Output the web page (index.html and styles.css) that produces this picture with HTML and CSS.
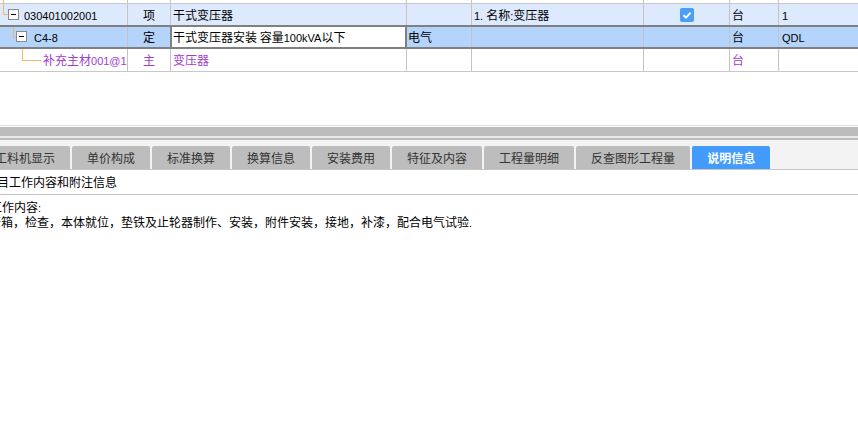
FILE: index.html
```html
<!DOCTYPE html>
<html lang="zh-CN">
<head>
<meta charset="utf-8">
<title>说明信息</title>
<link rel="stylesheet" href="styles.css">
</head>
<body>
<div class="page">
  <div class="grid">
    <div class="row stub">
      <div class="c c1"><span class="tl tl-stub"></span></div>
      <div class="c c2"></div><div class="c c3"></div><div class="c c4"></div>
      <div class="c c5"></div><div class="c c6"></div><div class="c c7"></div><div class="c c8"></div>
    </div>
    <div class="row r1">
      <div class="c c1 tree1">
        <span class="tl tl-v1"></span><span class="tl tl-h1"></span>
        <span class="box b1"></span>
        <span class="a">030401002001</span>
      </div>
      <div class="c c2 ctr">项</div>
      <div class="c c3">干式变压器</div>
      <div class="c c4"></div>
      <div class="c c5"><span class="a">1. </span>名称<span class="a">:</span>变压器</div>
      <div class="c c6 ctr"><span class="chk"><svg viewBox="0 0 14 14" width="14" height="14"><path d="M3.5 7.2 L6 9.6 L10.6 4.6" fill="none" stroke="#fff" stroke-width="2"/></svg></span></div>
      <div class="c c7">台</div>
      <div class="c c8"><span class="a">1</span></div>
    </div>
    <div class="row r2">
      <div class="c c1 tree2">
        <span class="tl tl-v2"></span><span class="tl tl-h2"></span>
        <span class="box b2"></span>
        <span class="a">C4-8</span>
      </div>
      <div class="c c2 ctr">定</div>
      <div class="c c3 edit">干式变压器安装 容量<span class="a">100kVA</span>以下</div>
      <div class="c c4">电气</div>
      <div class="c c5"></div>
      <div class="c c6"></div>
      <div class="c c7">台</div>
      <div class="c c8"><span class="a">QDL</span></div>
    </div>
    <div class="row r3 purple">
      <div class="c c1 tree3">
        <span class="tl tl-v3"></span><span class="tl tl-h3"></span>
        补充主材<span class="a">001@1</span>
      </div>
      <div class="c c2 ctr">主</div>
      <div class="c c3">变压器</div>
      <div class="c c4"></div>
      <div class="c c5"></div>
      <div class="c c6"></div>
      <div class="c c7">台</div>
      <div class="c c8"></div>
    </div>
  </div>

  <div class="splitter"></div>

  <div class="tabstrip">
    <div class="tab first">工料机显示</div>
    <div class="tab">单价构成</div>
    <div class="tab">标准换算</div>
    <div class="tab">换算信息</div>
    <div class="tab">安装费用</div>
    <div class="tab">特征及内容</div>
    <div class="tab">工程量明细</div>
    <div class="tab">反查图形工程量</div>
    <div class="tab active">说明信息</div>
  </div>

  <div class="info-head"><span class="shift">项目工作内容和附注信息</span></div>
  <div class="info-body">
    <p class="l1">工作内容<span class="a">:</span></p>
    <p class="l2">开箱，检查，本体就位，垫铁及止轮器制作、安装，附件安装，接地，补漆，配合电气试验<span class="a">.</span></p>
  </div>
</div>
</body>
</html>
```

FILE: styles.css
```css
* { box-sizing: border-box; }
html, body { margin: 0; padding: 0; background: #fff; }
body {
  width: 858px;
  height: 431px;
  overflow: hidden;
  font-family: "Noto Sans CJK SC", "Liberation Sans", sans-serif;
  font-size: 12px;
  color: #000;
}
.page { width: 858px; overflow: hidden; }

.a { font-family: "Liberation Sans", "Noto Sans CJK SC", sans-serif; font-size: 11px; }

/* grid */
.grid { height: 125px; }
.row { display: flex; width: 858px; }
.c {
  position: relative;
  border-right: 1px solid #c4c4c4;
  white-space: nowrap;
  overflow: hidden;
  padding-left: 2px;
}
.c1 { width: 128px; }
.c2 { width: 43px; }
.c3 { width: 236px; }
.c4 { width: 65px; }
.c5 { width: 172px; }
.c6 { width: 86px; }
.c7 { width: 49px; }
.c8 { flex: 1; border-right: 0; padding-left: 3px; }
.ctr { text-align: center; padding-left: 0; }

.stub { height: 4px; border-bottom: 1px solid #c8c8c8; }
.r1 { height: 21px; line-height: 21px; background: #dde9fc; }
.r2 {
  height: 24px; line-height: 20px;
  background: #b4d4fc;
  border-top: 2px solid #808080;
  border-bottom: 2px solid #808080;
}
.r3 { height: 23px; line-height: 22px; border-bottom: 1px solid #c8c8c8; }
.purple { color: #a23cc8; }

.r2 .c4 { padding-left: 1px; }
.edit {
  background: #fff;
  border-right-color: #808080;
  box-shadow: -1px 0 0 #808080, inset 1px 0 0 #808080, inset -1px 0 0 #808080;
}
.c6 .chk {
  display: inline-block;
  width: 14px; height: 14px;
  margin-top: 4px;
  vertical-align: top;
  border-radius: 2px;
  background: #4a9ef8;
}
.chk svg { display: block; }

/* tree */
.tree1 { padding-left: 24px; }
.tree2 { padding-left: 34px; }
.tree3 { padding-left: 43px; }
.tl { position: absolute; background: #f7b964; }
.tl-stub { left: 3px; top: 0; width: 1px; height: 4px; }
.tl-v1 { left: 3px; top: 0; width: 1px; height: 11px; }
.tl-h1 { left: 3px; top: 10px; width: 5px; height: 1px; }
.tl-v2 { left: 13px; top: 0; width: 1px; height: 10px; }
.tl-h2 { left: 13px; top: 10px; width: 4px; height: 1px; }
.tl-v3 { left: 22px; top: 0; width: 1px; height: 12px; }
.tl-h3 { left: 22px; top: 11px; width: 19px; height: 1px; }
.box {
  position: absolute;
  width: 11px; height: 11px;
  border: 1px solid #8a8a8a;
  background: #fff;
}
.box::after {
  content: "";
  position: absolute;
  left: 2px; top: 4px;
  width: 5px; height: 1px;
  background: #000;
}
.b1 { left: 8px; top: 5px; }
.b2 { left: 16px; top: 4px; }

/* splitter */
.splitter {
  height: 15px;
  border-top: 1px solid #e2e2e2;
  background: linear-gradient(#fff 0 1px, #bcbcbc 1px 10px, #e8e8e8 10px 12px, #bcbcbc 12px 14px);
}

/* tabs */
.tabstrip {
  display: flex;
  gap: 2px;
  height: 30px;
  padding-top: 6px;
  background: #f3f3f3;
  border-bottom: 1px solid #c6c6c6;
  margin-left: -20px;
  width: 878px;
}
.tab {
  height: 23px;
  line-height: 23px;
  padding: 0 15px;
  background: #bdbdbd;
  color: #333;
  border-radius: 2px 2px 0 0;
  white-space: nowrap;
}
.tab.active { background: #439cfd; color: #fff; font-weight: bold; }

.info-head {
  height: 25px;
  line-height: 24px;
  border-bottom: 1px solid #c6c6c6;
  white-space: nowrap;
}
.shift { margin-left: -15px; }
.info-body { padding-top: 5px; margin-left: -10px; }
.info-body p { margin: 0; line-height: 14px; white-space: nowrap; }
.info-body .l2 { margin-left: -1px; }
```
